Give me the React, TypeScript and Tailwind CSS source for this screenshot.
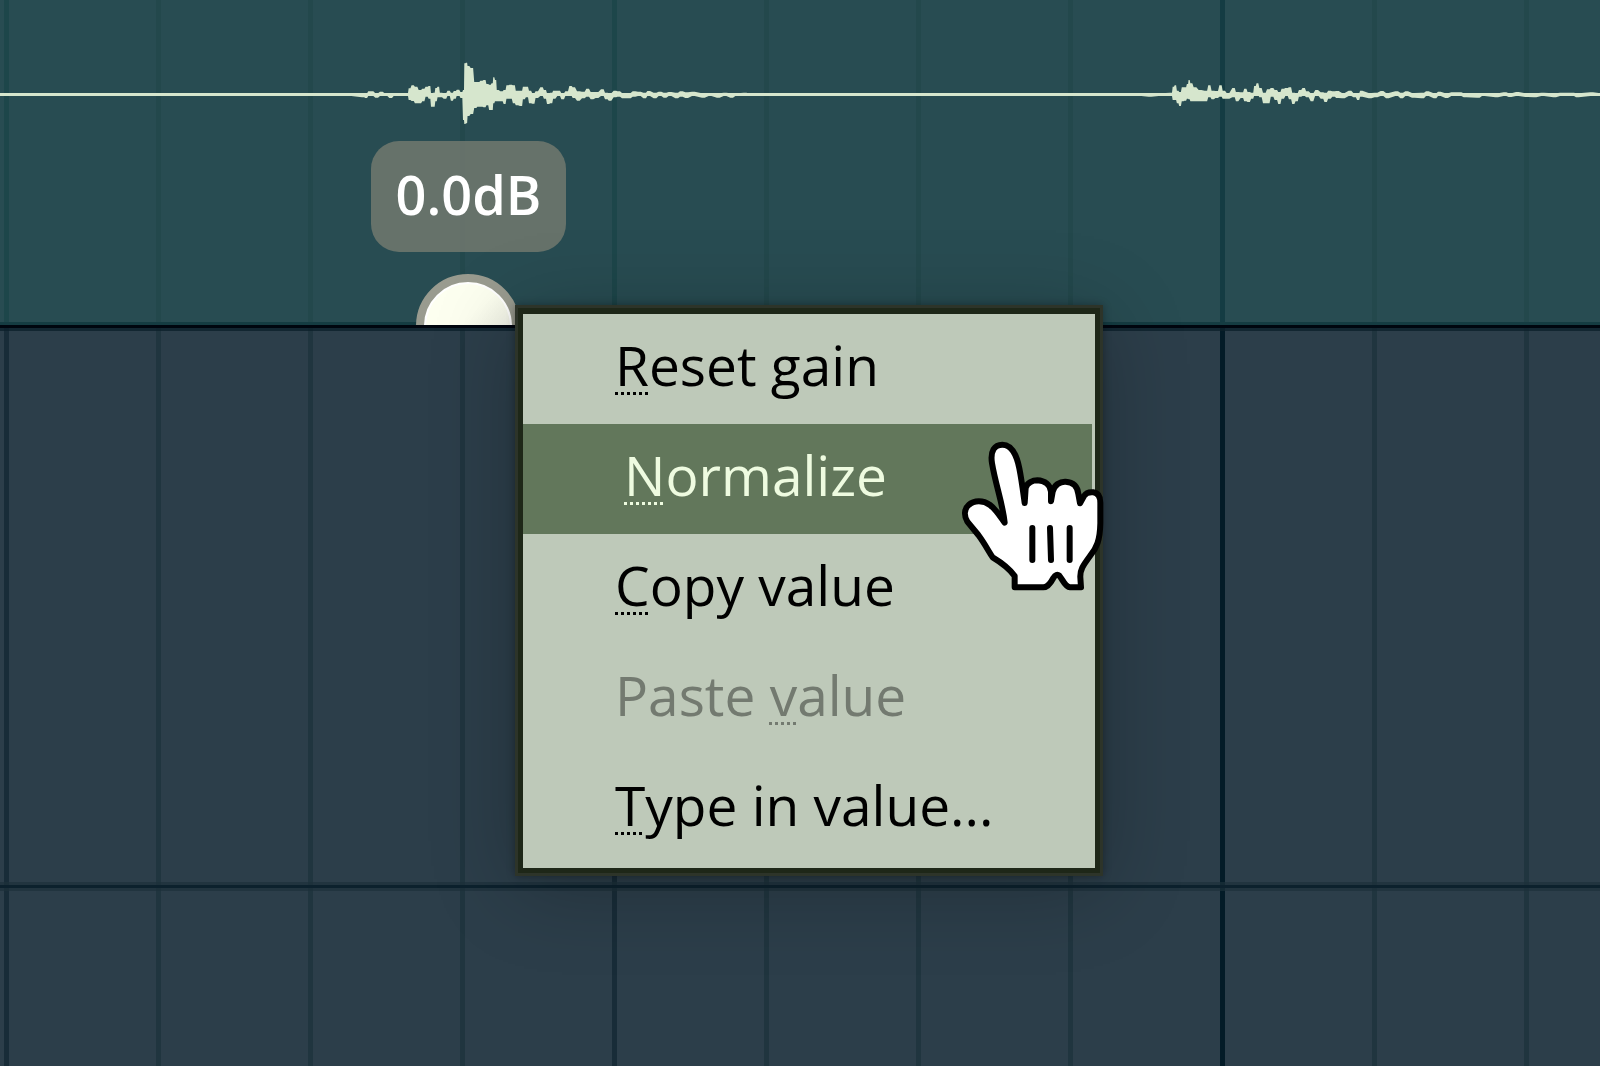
import React from 'react';
import clsx from 'clsx';

interface MenuItem {
  before: string;
  hotkey: string;
  after: string;
  active?: boolean;
  disabled?: boolean;
}

const MENU_ITEMS: MenuItem[] = [
  { before: '', hotkey: 'R', after: 'eset gain' },
  { before: '', hotkey: 'N', after: 'ormalize', active: true },
  { before: '', hotkey: 'C', after: 'opy value' },
  { before: 'Paste ', hotkey: 'v', after: 'alue', disabled: true },
  { before: '', hotkey: 'T', after: 'ype in value...' },
];

// Envelope samples: [x, top, bottom], three units per pixel
type Sample = [number, number, number];

const FIRST_HIT: Sample[] = [
  [0, 160, 168], [40, 160, 172], [48, 160, 174], [58, 154, 168], [66, 154, 168], [80, 160, 173], [94, 155, 168],
  [108, 160, 168], [122, 160, 174], [135, 160, 168], [172, 159, 168], [178, 145, 180], [188, 136, 183], [198, 140, 190], [210, 150, 190],
  [220, 146, 184], [230, 140, 170], [239, 138, 176], [245, 160, 200], [252, 158, 200], [258, 144, 184],
  [265, 140, 172], [272, 158, 172], [285, 160, 176], [296, 152, 168], [306, 158, 182], [314, 153, 176],
  [324, 149, 166], [335, 156, 174], [341, 150, 240], [344, 70, 252], [350, 68, 250], [354, 78, 228],
  [366, 84, 222], [376, 126, 204], [385, 126, 200], [394, 122, 200], [404, 120, 202], [412, 132, 196],
  [420, 134, 210], [427, 130, 210], [431, 112, 190], [437, 120, 184], [442, 150, 184], [455, 154, 184],
  [464, 150, 192], [472, 136, 176], [482, 134, 176], [492, 136, 190], [500, 152, 196], [514, 152, 198],
  [521, 140, 178], [531, 140, 172], [540, 152, 190], [550, 160, 191], [560, 154, 174], [575, 142, 168],
  [585, 150, 176], [594, 160, 192], [604, 158, 190], [612, 152, 176], [626, 152, 168], [638, 160, 178],
  [650, 154, 168], [662, 138, 168], [671, 142, 174], [685, 154, 182], [700, 155, 175], [713, 146, 170],
  [726, 156, 178], [741, 156, 174], [757, 148, 168], [769, 158, 178], [780, 160, 182], [795, 152, 172],
  [806, 154, 170], [820, 159, 175], [838, 159, 175], [852, 154, 170], [868, 155, 168], [884, 158, 175],
  [896, 153, 168], [915, 158, 175], [930, 155, 168], [945, 158, 173], [960, 156, 168], [980, 158, 175],
  [994, 154, 170], [1010, 157, 174], [1030, 155, 168], [1060, 160, 173], [1080, 159, 168], [1105, 160, 173],
  [1125, 158, 168], [1145, 160, 173], [1160, 160, 168], [1185, 158, 168], [1200, 160, 168],
];

const SECOND_HIT: Sample[] = [
  [0, 160, 168], [30, 160, 170], [60, 160, 168], [94, 158, 168], [100, 140, 180], [106, 136, 180], [113, 152, 190],
  [120, 156, 198], [128, 142, 184], [136, 142, 182], [143, 132, 176], [147, 120, 178], [153, 130, 184],
  [165, 142, 184], [180, 150, 184], [198, 152, 184], [208, 136, 172], [218, 152, 178], [230, 153, 174],
  [242, 136, 170], [251, 152, 176], [264, 159, 176], [281, 144, 172], [291, 156, 184], [306, 157, 174],
  [316, 146, 184], [326, 156, 186], [337, 158, 176], [345, 138, 168], [352, 130, 166], [361, 144, 172],
  [373, 158, 190], [385, 148, 190], [396, 144, 170], [408, 150, 180], [418, 156, 192], [428, 146, 176],
  [440, 144, 168], [450, 142, 178], [460, 158, 192], [470, 159, 184], [480, 150, 170], [491, 144, 168],
  [502, 154, 172], [516, 160, 184], [530, 150, 166], [546, 157, 176], [557, 158, 186], [568, 152, 176],
  [581, 154, 170], [592, 153, 174], [610, 159, 175], [630, 152, 168], [644, 159, 172], [655, 160, 180],
  [663, 152, 170], [690, 159, 175], [708, 158, 172], [726, 153, 168], [742, 159, 175], [770, 154, 168],
  [785, 158, 175], [800, 154, 168], [820, 159, 173], [848, 158, 175], [862, 154, 168], [885, 160, 175],
  [898, 155, 168], [920, 160, 174], [938, 157, 168], [960, 157, 168], [975, 160, 172], [1015, 160, 173],
  [1030, 160, 168], [1070, 160, 172], [1095, 157, 168], [1110, 160, 171], [1132, 156, 168], [1160, 160, 171],
  [1185, 160, 172], [1208, 158, 168], [1244, 160, 172], [1264, 158, 168], [1298, 158, 168], [1312, 160, 172],
  [1355, 157, 168], [1380, 159, 168],
];

// Every sample gets a short plateau so the peaks stay blocky
const envelope = (samples: Sample[]) => {
  const steps = samples.flatMap(([x, top, bottom], i): Sample[] => {
    const before = i > 0 ? Math.min((x - samples[i - 1][0]) / 3, 4) : 0;
    const after = i < samples.length - 1 ? Math.min((samples[i + 1][0] - x) / 3, 4) : 0;
    return [[x - before, top, bottom], [x + after, top, bottom]];
  });
  const upper = steps.map(([x, y]) => `${x},${y}`);
  const lower = steps.map(([x, , y]) => `${x},${y}`).reverse();
  return [...upper, ...lower].join(' ');
};

const Waveform: React.FC = () => (
  <svg viewBox="0 0 4800 555" preserveAspectRatio="none" className="block w-full h-[185px] fill-[#d6e6cd]" aria-hidden="true">
    <rect x="0" y="279" width="4800" height="9" />
    <polygon points={envelope(FIRST_HIT)} transform="translate(1050 120)" />
    <polygon points={envelope(SECOND_HIT)} transform="translate(3420 120)" />
  </svg>
);

interface GridLinesProps {
  normal: string;
  beat: string;
  bar: string;
}

const GridLines: React.FC<GridLinesProps> = ({ normal, beat, bar }) => (
  <div className="absolute inset-0 flex overflow-hidden pl-1">
    {Array.from({ length: 32 }, (_, i) => (
      <div
        key={i}
        className={clsx('w-38 shrink-0 border-l-5', i % 8 === 0 && i > 0 ? bar : i % 4 === 0 ? beat : normal)}
      />
    ))}
  </div>
);

const PointerHand: React.FC = () => (
  <svg
    viewBox="60 450 441 459"
    className="absolute left-[960px] top-[440px] w-[147px] h-[153px] pointer-events-none"
    fill="none"
    stroke="#000"
    strokeWidth="18"
    strokeLinecap="round"
    strokeLinejoin="round"
    aria-hidden="true"
  >
    <path
      fill="#fff"
      d="M194 698C188 640 168 590 156 520C150 482 164 464 187 464C214 464 230 495 238 535C245 570 250 610 254 639L257 594C261 578 279 571 292 571C315 572 331 585 333 605L333 634L338 605C343 585 360 574 377 575C400 576 413 590 415 612L420 640L432 618C439 607 450 606 460 607C475 609 481 620 481 638L481 700C480 750 470 775 450 798C428 828 420 840 421 862L423 892L390 892C375 891 368 868 358 857C352 852 346 854 340 864C330 883 322 892 310 892L224 892L224 858C210 838 188 820 158 802C145 783 135 762 115 735L82 695C72 677 72 657 86 645C102 630 130 630 150 645C168 658 182 682 194 698Z"
    />
    <path d="M277 714L277 810M330 714L333 810M389 714L389 810" />
  </svg>
);

const ContextMenu: React.FC = () => (
  <div
    role="menu"
    className="absolute left-[515px] top-[305px] w-[588px] border-3 border-[#2d3429] shadow-[0_12px_80px_rgba(0,0,0,0.24),0_0_8px_rgba(0,0,0,0.3)]"
  >
    <div className="border-[#1e2718] border-5 border-t-6 bg-[#bec9b9] pb-1">
      {MENU_ITEMS.map((item) => (
        <div key={item.hotkey} className="pr-[3px]">
          <button
            type="button"
            role="menuitem"
            disabled={item.disabled}
            className={clsx(
              'block w-full h-[110px] pb-2 text-left text-[55px] leading-[100px] whitespace-nowrap',
              item.active ? 'bg-[#62775b] pl-[101px] text-[#eefbe0]' : 'pl-[92px]',
              item.disabled && 'text-[#737a70]',
              !item.active && !item.disabled && 'text-black'
            )}
          >
            {item.before}
            <span className="underline decoration-dotted decoration-3 underline-offset-6 [text-decoration-skip-ink:none]">
              {item.hotkey}
            </span>
            {item.after}
          </button>
        </div>
      ))}
    </div>
  </div>
);

const App: React.FC = () => {
  return (
    <div className="relative flex min-h-screen flex-col overflow-hidden bg-[#2c3e4a] font-['Open_Sans',sans-serif]">
      {/* Audio clip */}
      <section className="relative h-[325px] overflow-hidden bg-[#284c52]">
        <GridLines normal="border-[#23484c]" beat="border-[#1d464a]" bar="border-[#143c43]" />
        <div className="relative">
          <Waveform />
        </div>
        <div className="absolute inset-x-0 bottom-0 h-[3px] bg-[#153c42]" />
        <div className="absolute left-[416px] top-[274px] size-[104px] rounded-full border-8 border-[#999b8f] bg-linear-to-br from-[#fdfff0] from-45% to-[#e4e6dc] shadow-[inset_0_0_0_2px_#fff]" />
        <output className="absolute left-[371px] top-[141px] flex h-[111px] w-[195px] items-center justify-center rounded-[28px] bg-[#69746b]/95 pb-1 text-[54px] font-semibold text-white">
          0.0dB
        </output>
      </section>

      {/* Empty tracks */}
      <section className="relative h-[563px] border-t-3 border-b-3 border-t-[#00060f] border-b-[#0c212d]">
        <GridLines normal="border-[#20353f]" beat="border-[#182c38]" bar="border-[#031b27]" />
        <div className="absolute inset-x-0 top-0 h-[3px] bg-[#0c202b]/80" />
        <div className="absolute inset-x-0 bottom-0 h-[3px] bg-[#1c303b]/70" />
      </section>
      <section className="relative flex-1">
        <GridLines normal="border-[#20353f]" beat="border-[#182c38]" bar="border-[#031b27]" />
        <div className="absolute inset-x-0 top-0 h-[3px] bg-[#1c303b]/70" />
      </section>

      <ContextMenu />
      <PointerHand />
    </div>
  );
};

export default App;
